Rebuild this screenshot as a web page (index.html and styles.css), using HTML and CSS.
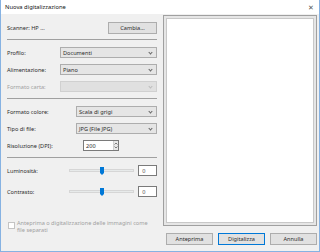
FILE: index.html
```html
<!DOCTYPE html>
<html lang="it">
<head>
    <meta charset="UTF-8">
    <title>Nuova digitalizzazione</title>
    <link rel="stylesheet" href="styles.css">
</head>
<body>
    <div class="finestra">
        <div class="titolo">
            <span>Nuova digitalizzazione</span>
            <span class="chiudi">&#x2715;</span>
        </div>
        <div class="corpo">
            <div class="sinistra">
                <div class="riga riga-scanner">
                    <span>Scanner: HP ...</span>
                    <button class="btn btn-cambia">Cambia...</button>
                </div>
                <div class="sep"></div>

                <div class="riga">
                    <label>Profilo:</label>
                    <div class="select">Documenti</div>
                </div>
                <div class="riga">
                    <label>Alimentazione:</label>
                    <div class="select">Piano</div>
                </div>
                <div class="riga disabilitata">
                    <label>Formato carta:</label>
                    <div class="select"></div>
                </div>
                <div class="sep"></div>

                <div class="riga">
                    <label>Formato colore:</label>
                    <div class="select corto">Scala di grigi</div>
                </div>
                <div class="riga">
                    <label>Tipo di file:</label>
                    <div class="select corto">JPG (File JPG)</div>
                </div>
                <div class="riga">
                    <label>Risoluzione (DPI):</label>
                    <div class="spin">
                        <span>200</span>
                        <span class="frecce">
                            <svg width="4" height="3" viewBox="0 0 4 3"><path d="M0.5 2.5 L2 1 L3.5 2.5" fill="none" stroke="#606060" stroke-width="0.8"/></svg>
                            <svg width="4" height="3" viewBox="0 0 4 3"><path d="M0.5 0.5 L2 2 L3.5 0.5" fill="none" stroke="#606060" stroke-width="0.8"/></svg>
                        </span>
                    </div>
                </div>
                <div class="sep"></div>

                <div class="riga riga-slider">
                    <label>Luminosità:</label>
                    <div class="slider"><span class="cursore"></span></div>
                    <div class="valore">0</div>
                </div>
                <div class="riga riga-slider">
                    <label>Contrasto:</label>
                    <div class="slider"><span class="cursore"></span></div>
                    <div class="valore">0</div>
                </div>

                <div class="check">
                    <span class="casella"></span>
                    <span>Anteprima o digitalizzazione delle immagini come file separati</span>
                </div>
            </div>

            <div class="destra">
                <div class="anteprima"><div class="anteprima-interno"></div></div>
                <div class="pulsanti">
                    <button class="btn">Anteprima</button>
                    <button class="btn predefinito">Digitalizza</button>
                    <button class="btn">Annulla</button>
                </div>
            </div>
        </div>
    </div>
</body>
</html>
```

FILE: styles.css
```css
* {
    box-sizing: border-box;
}
body {
    margin: 0;
    font-family: "Noto Sans", "Open Sans", sans-serif;
    font-size: 5.6px;
    color: #2b2b2b;
}
.finestra {
    width: 320px;
    height: 252px;
    background-color: #f0f0f0;
    border: 1px solid #86b2e2;
    border-top: none;
    display: flex;
    flex-direction: column;
}
.titolo {
    height: 14px;
    background-color: #ffffff;
    display: flex;
    align-items: center;
    justify-content: space-between;
    padding: 0 5px 0 4px;
    font-size: 5.8px;
    color: #111;
}
.chiudi {
    font-size: 6.5px;
    color: #555;
}
.corpo {
    flex: 1;
    display: flex;
    padding: 1px 2px 6px 6px;
    gap: 6px;
}
.sinistra {
    width: 150px;
    display: flex;
    flex-direction: column;
    padding-top: 7px;
}
.riga {
    display: flex;
    align-items: center;
    height: 11px;
    margin-bottom: 6px;
}
.riga label {
    flex: 1;
}
.riga-scanner {
    justify-content: space-between;
}
.sep {
    height: 1px;
    background-color: #a0a0a0;
    margin: 0 0 7px;
}
.select {
    width: 97px;
    height: 11px;
    background-color: #e5e5e5;
    border: 1px solid #adadad;
    padding-left: 2px;
    display: flex;
    align-items: center;
    position: relative;
}
.select::after {
    content: "";
    position: absolute;
    right: 4px;
    top: 3px;
    width: 2px;
    height: 2px;
    border-right: 1px solid #666;
    border-bottom: 1px solid #666;
    transform: rotate(45deg);
}
.select.corto {
    width: 81px;
}
.disabilitata {
    color: #a0a0a0;
}
.disabilitata .select {
    background-color: #e0e0e0;
    border-color: #d0d0d0;
}
.disabilitata .select::after {
    border-color: #bcbcbc;
}
.spin {
    width: 36px;
    height: 11px;
    margin-right: 38px;
    background-color: #fff;
    border: 1px solid #7a7a7a;
    display: flex;
    justify-content: space-between;
    align-items: center;
    padding-left: 2px;
}
.frecce {
    width: 5px;
    height: 9px;
    background-color: #e8e8e8;
    border-left: 1px solid #d0d0d0;
    display: flex;
    flex-direction: column;
    justify-content: space-around;
    align-items: center;
}
.frecce svg {
    display: block;
}
.riga-slider {
    margin-bottom: 10px;
}
.riga-slider label {
    flex: none;
    width: 62px;
}
.slider {
    width: 66px;
    height: 3px;
    background-color: #e7eaea;
    border: 1px solid #d6d6d6;
    position: relative;
    margin-right: 4px;
}
.cursore {
    position: absolute;
    left: 30px;
    top: -3px;
    width: 4px;
    height: 8px;
    background-color: #0078d7;
    clip-path: polygon(0 0, 100% 0, 100% 75%, 50% 100%, 0 75%);
}
.valore {
    width: 19px;
    height: 11px;
    background-color: #fff;
    border: 1px solid #7a7a7a;
    padding-left: 3px;
    display: flex;
    align-items: center;
    color: #555;
    margin-left: auto;
}
.check {
    margin-top: 13px;
    display: flex;
    align-items: flex-start;
    gap: 2px;
    color: #a0a0a0;
    line-height: 7px;
    padding-right: 4px;
}
.casella {
    flex: none;
    width: 7px;
    height: 7px;
    border: 1px solid #c4c4c4;
    background-color: #fff;
    margin-top: 2px;
    margin-left: 1px;
}
.destra {
    flex: 1;
    display: flex;
    flex-direction: column;
}
.anteprima {
    flex: 1;
    border: 1px solid #a0a0a0;
    padding: 2px;
    background-color: #e6e6e6;
}
.anteprima-interno {
    height: 100%;
    background-color: #fff;
    border: 1px solid #c8c8c8;
}
.pulsanti {
    display: flex;
    justify-content: flex-end;
    gap: 5px;
    margin-top: 7px;
}
.btn {
    font-family: inherit;
    font-size: 5.6px;
    color: #2b2b2b;
    background-color: #e1e1e1;
    border: 1px solid #adadad;
    height: 12px;
    width: 47px;
    padding: 0;
}
.btn-cambia {
    width: 49px;
}
.predefinito {
    border-color: #0078d7;
}
```
